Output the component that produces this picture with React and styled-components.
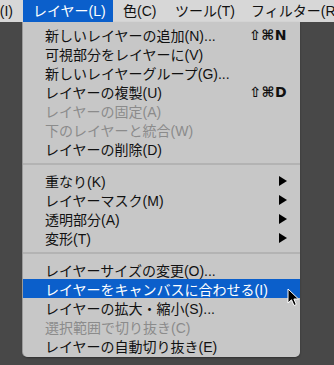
import styled, { createGlobalStyle } from 'styled-components';

const GlobalStyle = createGlobalStyle`
  html, body {
    margin: 0;
    padding: 0;
    background: #484848;
  }
  body {
    font-family: "Liberation Sans", "Noto Sans CJK JP", sans-serif;
    -webkit-font-smoothing: antialiased;
  }
`;

const menus = [
  { label: 'レイヤー(L)', width: 90, open: true },
  { label: '色(C)', width: 52 },
  { label: 'ツール(T)', width: 76 },
  { label: 'フィルター(R)' },
];

const groups = [
  [
    { label: '新しいレイヤーの追加(N)...', shortcut: '⇧⌘N' },
    { label: '可視部分をレイヤーに(V)' },
    { label: '新しいレイヤーグループ(G)...' },
    { label: 'レイヤーの複製(U)', shortcut: '⇧⌘D' },
    { label: 'レイヤーの固定(A)', disabled: true },
    { label: '下のレイヤーと統合(W)', disabled: true },
    { label: 'レイヤーの削除(D)' },
  ],
  [
    { label: '重なり(K)', submenu: true },
    { label: 'レイヤーマスク(M)', submenu: true },
    { label: '透明部分(A)', submenu: true },
    { label: '変形(T)', submenu: true },
  ],
  [
    { label: 'レイヤーサイズの変更(O)...' },
    { label: 'レイヤーをキャンバスに合わせる(I)', active: true },
    { label: 'レイヤーの拡大・縮小(S)...' },
    { label: '選択範囲で切り抜き(C)', disabled: true },
    { label: 'レイヤーの自動切り抜き(E)' },
  ],
];

const App = () => {
  return (
    <Screen>
      <GlobalStyle />
      <MenuBar>
        <ClippedItem>
          <span>イメージ(I)</span>
        </ClippedItem>
        {menus.map((m) => (
          <BarItem key={m.label} $open={m.open} $width={m.width}>
            {m.label}
          </BarItem>
        ))}
      </MenuBar>
      <Dropdown>
        {groups.map((group, gi) => (
          <Group key={gi}>
            {gi > 0 && <Separator />}
            {group.map((item) => (
              <Item key={item.label} $active={item.active} $disabled={item.disabled}>
                <span>{item.label}</span>
                {item.shortcut && <Shortcut>{item.shortcut}</Shortcut>}
                {item.submenu && <Arrow />}
                {item.active && (
                  <Cursor width='13' height='19' viewBox='0 0 13 19'>
                    <path
                      d='M1 1 L1 15 L4.5 11.8 L7 17.5 L9.3 16.5 L6.9 11 L11.5 11 Z'
                      fill='#000'
                      stroke='#fff'
                      strokeWidth='1'
                      strokeLinejoin='round'
                    />
                  </Cursor>
                )}
              </Item>
            ))}
          </Group>
        ))}
      </Dropdown>
    </Screen>
  );
};

export default App;

const Screen = styled.div`
  width: 334px;
  height: 365px;
  overflow: hidden;
  background: #484848;
`;

const MenuBar = styled.div`
  display: flex;
  align-items: center;
  height: 22px;
  background: #d7d7d7;
  white-space: nowrap;
  overflow: hidden;
  font-size: 14px;
  color: #111;
`;

const ClippedItem = styled.div`
  display: flex;
  justify-content: flex-end;
  flex: 0 0 23px;
  height: 22px;
  line-height: 22px;
  overflow: hidden;

  span {
    padding-right: 10px;
  }
`;

const BarItem = styled.div`
  flex: 0 0 ${(p) => (p.$width ? `${p.$width}px` : 'auto')};
  box-sizing: border-box;
  height: 22px;
  line-height: 22px;
  padding-left: 10px;
  overflow: hidden;
  background: ${(p) => (p.$open ? '#0b5fcb' : 'transparent')};
  color: ${(p) => (p.$open ? '#fff' : '#111')};
`;

const Dropdown = styled.div`
  margin-left: 23px;
  width: 277px;
  padding: 3px 0 2px;
  background: #c7c7c7;
  border-radius: 0 0 5px 5px;
  box-shadow: -1px 0 0 #9a9a9a, 0 1px 2px rgba(0, 0, 0, 0.35);
  font-size: 14px;
`;

const Group = styled.div`
  display: flex;
  flex-direction: column;
`;

const Separator = styled.div`
  height: 2px;
  margin: 5px 0 6px;
  background: #b3b3b3;
`;

const Item = styled.div`
  position: relative;
  display: flex;
  align-items: center;
  justify-content: space-between;
  height: 19px;
  padding: 0 13px 0 22px;
  white-space: nowrap;
  background: ${(p) => (p.$active ? '#0b5fcb' : 'transparent')};
  color: ${(p) => (p.$active ? '#fff' : p.$disabled ? '#8b8b8b' : '#111')};
`;

const Shortcut = styled.span`
  font-family: "DejaVu Sans", sans-serif;
  font-size: 14px;
  font-weight: bold;
  letter-spacing: 0.5px;
`;

const Arrow = styled.span`
  width: 0;
  height: 0;
  border-top: 5px solid transparent;
  border-bottom: 5px solid transparent;
  border-left: 8px solid #000;
`;

const Cursor = styled.svg`
  position: absolute;
  left: 264px;
  top: 9px;
`;
